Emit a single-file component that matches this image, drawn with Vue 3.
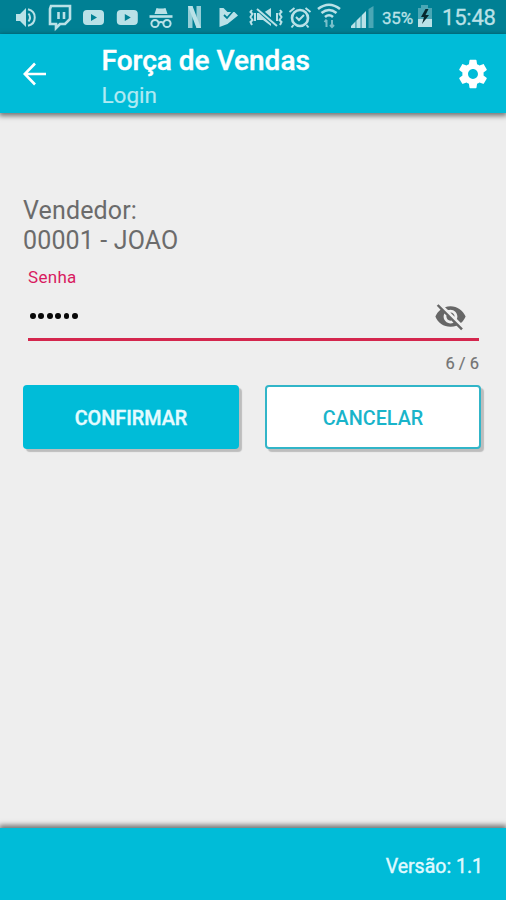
<script setup>
import { ref } from 'vue'

const seller = '00001 - JOAO'
const password = ref('••••••')
const maxLength = 6
</script>

<template>
  <div class="screen">
    <div class="status">
      <svg class="glyph" width="42" height="34" viewBox="0 0 42 34">
        <path d="M16 14h4l6-6v19l-6-6h-4z" fill="currentColor" />
        <path d="M28.500 13.500q3 4 0 8M28 9.300c9 2 9 14.400 0 16.400" class="line" />
      </svg>
      <svg class="glyph" width="35" height="34" viewBox="42 0 35 34">
        <path d="M51 6h19v13l-5 5h-5l-4 4v-4h-6V9z" class="line thick" />
        <path d="M58.500 12v7M64 12v7" class="line thick" />
      </svg>
      <svg v-for="n in 2" :key="n" class="glyph" :width="n === 1 ? 34 : 33" height="34" :viewBox="n === 1 ? '77 0 34 34' : '77.2 0 33 34'">
        <path fill-rule="evenodd" d="M87 10h13q4 0 4 4v7q0 4-4 4H87q-4 0-4-4v-7q0-4 4-4zm4 4v7l6-3.500z" fill="currentColor" />
      </svg>
      <svg class="glyph" width="35" height="34" viewBox="144 0 35 34">
        <path d="M154.500 14l2-6q4.500 1 9 0l2 6z" fill="currentColor" />
        <path d="M149.500 16.500h23" class="line thick" />
        <circle cx="155" cy="23.500" r="3.600" class="line" /><circle cx="167" cy="23.500" r="3.600" class="line" />
        <path d="M158.500 23q2.500-2 5 0" class="line" />
      </svg>
      <svg class="glyph" width="31" height="34" viewBox="179 0 31 34">
        <path d="M188 6h4.500v22H188zM196.500 6h4.500v22h-4.500z" fill="currentColor" opacity=".8" />
        <path d="M188 6h4.500L201 28h-4.500z" fill="currentColor" />
      </svg>
      <svg class="glyph" width="34" height="34" viewBox="210 0 34 34">
        <path d="M219.500 8l4 0 4 4 7 0 3.500 3.500-10.500 8.500-8 3z" fill="currentColor" />
        <path d="M224 15l3 3 7-8" class="cut slim" />
      </svg>
      <svg class="glyph" width="41" height="34" viewBox="244 0 41 34">
        <path d="M257 13h6l8-5v18l-8-6h-6z" fill="currentColor" />
        <path d="M257 8l20 18" class="cut wide" />
        <path d="M257 9l20 17M252 10l-1.500 2 2 2-2 3 2 3-2 2 1.500 3M255 13v8M277 13v8M280 10l1.500 2-2 2 2 3-2 3 2 2-1.500 3" class="line" />
      </svg>
      <svg class="glyph" width="29" height="34" viewBox="285 0 29 34">
        <circle cx="300" cy="18" r="8" class="line thick" />
        <path d="M289.500 12l5-4M310.500 12l-5-4M293.500 25l-2 2.500M306.500 25l2 2.500M296 17l3 3 5-5" class="line" />
      </svg>
      <svg class="glyph" width="31" height="34" viewBox="314 0 31 34">
        <path d="M318 9q11-8.500 22 0M321.500 13q7.500-6 15 0M325 17q4-3.500 8 0" class="line thick" />
        <path d="M326.500 20v7M324.500 22l2-2.500M332 20v7M330 25l2 2 2-2" class="line" opacity=".65" />
      </svg>
      <svg class="glyph" width="34" height="34" viewBox="345 0 34 34">
        <path d="M351 28v-2l4-4v6zM356.500 28v-7.500l4-4v11.500zM362 28V15l4-4v17z" fill="currentColor" />
        <path d="M355 28v-6l1.500-1.500V28zM360.500 28V16.500L362 15v13z" fill="currentColor" opacity=".5" />
        <path d="M368.500 28V9l5-3v22z" fill="currentColor" opacity=".4" />
      </svg>
      <span class="percent">35%</span>
      <svg class="glyph" width="23" height="34" viewBox="414 0 23 34">
        <path d="M418 8h3V5h7v3h4v11h-14z" fill="currentColor" opacity=".4" />
        <path d="M418 19h14v8h-14z" fill="currentColor" />
        <path d="M425.500 9l-4.500 8h3l-2 7 7-9h-3.500l3-6z" fill="#06282e" />
      </svg>
      <span class="clock">15:48</span>
    </div>

    <header class="appbar">
      <svg class="back" width="24" height="24" viewBox="0 0 24 24"><path d="M23 12H2M12 1.500L1.800 12 12 22.500" fill="none" stroke="#fff" stroke-width="2.600" /></svg>
      <div class="titles">
        <h1>Força de Vendas</h1>
        <p>Login</p>
      </div>
      <svg class="gear" width="34" height="34" viewBox="0 0 24 24"><path fill="#fff" d="M19.430 12.980c.040-.320.070-.640.070-.980s-.030-.660-.070-.980l2.110-1.650c.190-.150.240-.420.120-.640l-2-3.460c-.120-.220-.390-.300-.610-.220l-2.490 1c-.520-.400-1.080-.730-1.690-.980l-.380-2.650C14.460 2.180 14.250 2 14 2h-4c-.250 0-.460.180-.490.420l-.380 2.650c-.610.250-1.170.590-1.690.980l-2.490-1c-.230-.090-.490 0-.610.220l-2 3.460c-.130.220-.070.490.120.640l2.110 1.650c-.040.320-.070.650-.070.980s.030.660.070.980l-2.110 1.650c-.190.150-.240.420-.120.640l2 3.460c.120.220.390.300.610.220l2.490-1c.520.400 1.080.730 1.690.980l.380 2.650c.030.240.240.420.490.420h4c.250 0 .460-.180.490-.420l.380-2.650c.610-.250 1.170-.590 1.690-.980l2.490 1c.230.090.490 0 .610-.220l2-3.460c.120-.220.070-.490-.120-.640zM12 15.500c-1.930 0-3.500-1.570-3.500-3.500s1.570-3.500 3.500-3.500 3.500 1.570 3.500 3.500-1.570 3.500-3.500 3.500z" /></svg>
    </header>

    <main class="content">
      <div class="seller">Vendedor:<br />{{ seller }}</div>
      <div class="field">
        <div class="label">Senha</div>
        <div class="entry">
          <span class="dots"><i v-for="n in password.length" :key="n"></i></span>
          <svg class="eye" width="33" height="33" viewBox="0 0 24 24"><path fill="#666" d="M12 7c2.760 0 5 2.240 5 5 0 .650-.130 1.260-.360 1.830l2.920 2.920c1.510-1.260 2.700-2.890 3.430-4.750-1.730-4.390-6-7.500-11-7.500-1.400 0-2.740.250-3.980.700l2.160 2.160C10.740 7.130 11.350 7 12 7zM2 4.270l2.280 2.280.460.460C3.080 8.300 1.780 10.020 1 12c1.730 4.390 6 7.500 11 7.500 1.550 0 3.030-.300 4.380-.840l.420.420L19.730 22 21 20.730 3.270 3 2 4.270zM7.530 9.800l1.550 1.550c-.050.210-.080.430-.080.650 0 1.660 1.340 3 3 3 .220 0 .440-.030.650-.080l1.550 1.550c-.670.330-1.410.530-2.200.530-2.760 0-5-2.240-5-5 0-.790.200-1.530.530-2.200zm4.310-.780l3.150 3.150.020-.160c0-1.660-1.340-3-3-3l-.170.010z" /></svg>
        </div>
        <div class="counter">{{ password.length }} / {{ maxLength }}</div>
      </div>
      <div class="actions">
        <button class="primary">CONFIRMAR</button>
        <button class="secondary">CANCELAR</button>
      </div>
    </main>

    <footer class="footer">Versão: 1.1</footer>
  </div>
</template>

<style>
body { background: #eee; }
</style>

<style scoped>
.screen {
  display: flex;
  flex-direction: column;
  width: 506px;
  height: 900px;
  background: #eee;
  font-family: Roboto, sans-serif;
  overflow: hidden;
}
.status {
  display: flex;
  height: 34px;
  flex: none;
  background: #008094;
  color: #b9e1e7;
  line-height: 36px;
  white-space: nowrap;
}
.glyph { display: block; flex: none; }
.line { fill: none; stroke: currentColor; stroke-width: 2; }
.thick { stroke-width: 2.6; }
.cut { fill: none; stroke: #008094; stroke-width: 2.4; }
.slim { stroke-width: 1.8; }
.wide { stroke-width: 5; }
.percent { width: 32px; padding-left: 3px; font-size: 17px; letter-spacing: -0.2px; -webkit-text-stroke: 0.3px currentColor; }
.clock { padding-left: 5px; font-size: 22px; letter-spacing: -0.2px; -webkit-text-stroke: 0.3px currentColor; }
.appbar {
  display: flex;
  flex: none;
  height: 79px;
  background: #00bcd8;
  box-shadow: 0 2px 5px 1px rgba(0, 0, 0, .5);
}
.back { margin: 28px 0 0 23px; }
.titles { flex: 1; padding-left: 54.5px; }
h1 { margin: 10px 0 0; font-size: 28px; line-height: 34px; font-weight: 500; color: #fff; -webkit-text-stroke: 0.4px #fff; }
.titles p { margin: 4px 0 0; font-size: 22.500px; line-height: 26px; color: #b0eaf3; -webkit-text-stroke: 0.2px #b0eaf3; }
.gear { margin: 23px 16px 0 0; }
.content { flex: 1; padding: 83px 25px 0 23px; }
.seller { font-size: 25px; line-height: 30px; letter-spacing: 0.15px; color: #6b6b6b; }
.field { margin: 12px 2px 0 5px; }
.label { font-size: 17px; line-height: 19px; letter-spacing: 0.3px; color: #d81b60; }
.entry {
  display: flex;
  align-items: center;
  justify-content: space-between;
  height: 54px;
  border-bottom: 3px solid #d4264d;
  box-sizing: border-box;
  padding: 7px 12px 0 2px;
}
.dots { display: flex; gap: 2.600px; }
.dots i { width: 5.800px; height: 5.800px; border-radius: 50%; background: #080808; }
.eye { display: block; }
.counter { margin-top: 13px; font-size: 16.5px; line-height: 20px; text-align: right; color: #737373; -webkit-text-stroke: 0.2px #737373; }
.actions { display: grid; grid-template-columns: 216px 216px; gap: 26px; margin-top: 11px; }
button {
  height: 64px;
  border: 0;
  border-radius: 4px;
  font-family: Roboto, sans-serif;
  font-size: 19.800px;
  font-weight: 500;
  padding: 2px 0 0;
  box-shadow: 3px 3px 1px #bdbdbd;
}
.primary { background: #00bcd8; color: #e4fbff; -webkit-text-stroke: 0.4px #e4fbff; }
.secondary { background: #fff; color: #19b4ca; border: 2px solid #31b5c8; }
.footer {
  flex: none;
  height: 72px;
  padding-right: 23px;
  background: #00bcd8;
  box-shadow: 0 -2px 5px 1px rgba(0, 0, 0, .5);
  color: #e0faff;
  font-size: 19.500px;
  -webkit-text-stroke: 0.4px #e0faff;
  line-height: 78px;
  text-align: right;
}
</style>
